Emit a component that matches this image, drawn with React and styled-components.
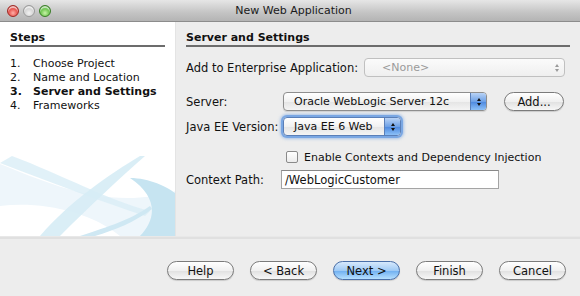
import React from "react";
import styled, { createGlobalStyle, css } from "styled-components";

const GlobalStyle = createGlobalStyle`
  html, body {
    margin: 0;
    padding: 0;
    background: #ededed;
  }
  body {
    font-family: "DejaVu Sans", "Liberation Sans", sans-serif;
    font-size: 11px;
    color: #111;
  }
`;

const Window = styled.div`
  width: 580px;
  height: 296px;
  display: flex;
  flex-direction: column;
  background: #ededed;
  overflow: hidden;
`;

const TitleBar = styled.div`
  height: 22px;
  flex: none;
  display: flex;
  align-items: center;
  background: linear-gradient(#e6e6e6, #c4c4c4 60%, #b4b4b4);
  border-bottom: 1px solid #8c8c8c;
  box-sizing: border-box;

  .title {
    flex: 1;
    text-align: center;
    font-size: 11px;
    color: #1a1a1a;
    margin-right: 49px;
  }
`;

const Lights = styled.div`
  display: flex;
  gap: 4px;
  padding-left: 7px;
  width: 49px;
`;

const Light = styled.span`
  width: 12px;
  height: 12px;
  border-radius: 50%;
  box-sizing: border-box;
  border: 1px solid ${(p) => p.$edge};
  background: radial-gradient(circle at 50% 70%, ${(p) => p.$light} 0%, ${(p) => p.$color} 60%, ${(p) => p.$edge} 100%);
  box-shadow: inset 0 2px 1px rgba(255, 255, 255, 0.7);
`;

const Body = styled.div`
  flex: 1;
  display: flex;
  min-height: 0;
`;

const Sidebar = styled.div`
  width: 176px;
  flex: none;
  background: #fff;
  display: flex;
  flex-direction: column;
  border-right: 1px solid #e4e4e4;
  box-sizing: border-box;
  overflow: hidden;
`;

const SectionTitle = styled.div`
  font-weight: bold;
  font-size: 11px;
  padding-bottom: 1px;
  border-bottom: 2px solid #6c6c6c;
  margin: 9px ${(p) => p.$right}px 0 10px;
  line-height: 13px;
`;

const StepList = styled.ol`
  list-style: none;
  margin: 10px 0 0 10px;
  padding: 0;
`;

const Step = styled.li`
  display: flex;
  line-height: 14px;
  font-weight: ${(p) => (p.$active ? "bold" : "normal")};

  .num {
    width: 23px;
  }
`;

const Swoosh = styled.svg`
  margin-top: auto;
  display: block;
`;

const Main = styled.div`
  flex: 1;
  display: flex;
  flex-direction: column;
`;

const Form = styled.div`
  margin: 0 0 0 10px;
  display: flex;
  flex-direction: column;
`;

const Row = styled.div`
  display: flex;
  align-items: center;
  height: ${(p) => p.$h || 25}px;
  margin-top: ${(p) => p.$mt || 0}px;
`;

const Label = styled.span`
  width: ${(p) => p.$w}px;
  flex: none;
  font-size: 11.5px;
`;

const Popup = styled.div`
  position: relative;
  width: ${(p) => p.$w}px;
  height: 19px;
  box-sizing: border-box;
  border: 1px solid #8e8e8e;
  border-radius: 4px;
  background: linear-gradient(#ffffff, #f1f1f1 50%, #e4e4e4 51%, #f4f4f4);
  display: flex;
  align-items: center;
  padding-left: 10px;
  font-size: 11px;
  color: #111;
  overflow: hidden;
  box-shadow: 0 1px 1px rgba(0, 0, 0, 0.12);

  ${(p) =>
    p.$focus &&
    css`
      box-shadow: 0 0 0 2px #7aa7e3, 0 0 3px 3px rgba(122, 167, 227, 0.6);
      border-color: #5a7fb8;
    `}

  ${(p) =>
    p.$disabled &&
    css`
      color: #9a9a9a;
      border-color: #c0c0c0;
      background: linear-gradient(#fbfbfb, #efefef);
      box-shadow: none;
      padding-left: 17px;
    `}
`;

const Stepper = styled.span`
  position: absolute;
  right: 0;
  top: 0;
  bottom: 0;
  width: 15px;
  display: flex;
  flex-direction: column;
  align-items: center;
  justify-content: center;
  gap: 2px;
  background: ${(p) =>
    p.$disabled ? "transparent" : "linear-gradient(#b9d3f6, #6ea1e6 50%, #4a86de 51%, #8cc0f7)"};
  border-left: ${(p) => (p.$disabled ? "none" : "1px solid #5a7fb8")};

  i {
    width: 0;
    height: 0;
    border-left: 2.5px solid transparent;
    border-right: 2.5px solid transparent;
  }
  i.up {
    border-bottom: 3px solid ${(p) => (p.$disabled ? "#9a9a9a" : "#111")};
  }
  i.down {
    border-top: 3px solid ${(p) => (p.$disabled ? "#9a9a9a" : "#111")};
  }
`;

const Pill = styled.button`
  width: ${(p) => p.$w}px;
  height: 19px;
  box-sizing: border-box;
  border: 1px solid #7b7b7b;
  border-radius: 10px;
  font-family: inherit;
  font-size: 11.5px;
  color: #111;
  padding: 0;
  margin-left: ${(p) => p.$ml || 0}px;
  background: linear-gradient(#ffffff, #f0f0f0 50%, #e0e0e0 51%, #f7f7f7);
  box-shadow: 0 1px 1px rgba(0, 0, 0, 0.15);

  ${(p) =>
    p.$primary &&
    css`
      border-color: #4a6fa8;
      background: linear-gradient(#d7e9fc, #9fcaf5 50%, #6eaef0 51%, #b6e0ff);
    `}
`;

const CheckRow = styled.label`
  display: flex;
  align-items: center;
  gap: 6px;
  margin-left: 100px;
  font-size: 11px;
`;

const Check = styled.span`
  width: 12px;
  height: 12px;
  box-sizing: border-box;
  border: 1px solid #8a8a8a;
  border-radius: 2px;
  background: linear-gradient(#ffffff, #ececec);
`;

const TextField = styled.div`
  width: 218px;
  height: 19px;
  box-sizing: border-box;
  border: 1px solid #a4a4a4;
  border-top-color: #888;
  background: #fff;
  display: flex;
  align-items: center;
  padding-left: 3px;
  font-size: 11.5px;
`;

const Divider = styled.div`
  height: 2px;
  flex: none;
  background: #e0e0e0;
  border-top: 1px solid #e8e8e8;
`;

const Footer = styled.div`
  height: 57px;
  flex: none;
  display: flex;
  align-items: center;
  justify-content: flex-end;
  gap: 16px;
  padding: 6px 14px 0 0;
  box-sizing: border-box;
`;

const steps = ["Choose Project", "Name and Location", "Server and Settings", "Frameworks"];

function Select({ w, children, focus, disabled }) {
  return (
    <Popup $w={w} $focus={focus} $disabled={disabled}>
      {children}
      <Stepper $disabled={disabled}>
        <i className="up" />
        <i className="down" />
      </Stepper>
    </Popup>
  );
}

export default function App() {
  return (
    <>
      <GlobalStyle />
      <Window>
        <TitleBar>
          <Lights>
            <Light $color="#e2403a" $light="#ffb0a8" $edge="#9e2a25" />
            <Light $color="#cfcfcf" $light="#f2f2f2" $edge="#9a9a9a" />
            <Light $color="#5bbd3c" $light="#c8f2a8" $edge="#3a7d27" />
          </Lights>
          <span className="title">New Web Application</span>
        </TitleBar>

        <Body>
          <Sidebar>
            <SectionTitle $right={10}>Steps</SectionTitle>
            <StepList>
              {steps.map((s, i) => (
                <Step key={s} $active={i === 2}>
                  <span className="num">{i + 1}.</span>
                  {s}
                </Step>
              ))}
            </StepList>
            <Swoosh width="176" height="80" viewBox="0 0 176 80">
              <path d="M0 8 C50 28 110 55 176 35 L176 80 L120 80 C90 55 40 45 0 50 Z" fill="#eef6fb" />
              <path d="M12 0 C60 18 110 45 150 55 L145 60 C100 45 55 28 0 7 Z" fill="#d9eef6" opacity="0.8" />
              <path d="M140 0 C110 18 70 45 40 80 L60 80 C90 50 120 22 145 0 Z" fill="#d6ecf5" opacity="0.9" />
              <path d="M130 22 C150 22 170 32 176 38 L176 80 L140 80 C155 65 160 42 130 22 Z" fill="#c6e4f1" />
              <path d="M80 80 C110 70 130 64 150 50 L152 53 C135 66 115 74 95 80 Z" fill="#cfe8f3" />
            </Swoosh>
          </Sidebar>

          <Main>
            <SectionTitle $right={10}>Server and Settings</SectionTitle>
            <Form>
              <Row $mt={10} $h={21}>
                <Label $w={178}>Add to Enterprise Application:</Label>
                <Select w={201} disabled>
                  &lt;None&gt;
                </Select>
              </Row>
              <Row $mt={13} $h={21}>
                <Label $w={97}>Server:</Label>
                <Select w={204}>Oracle WebLogic Server 12c</Select>
                <Pill $w={60} $ml={17}>Add...</Pill>
              </Row>
              <Row $mt={4} $h={21}>
                <Label $w={97}>Java EE Version:</Label>
                <Select w={118} focus>
                  Java EE 6 Web
                </Select>
              </Row>
              <Row $mt={10} $h={20}>
                <CheckRow>
                  <Check />
                  Enable Contexts and Dependency Injection
                </CheckRow>
              </Row>
              <Row $mt={2} $h={21}>
                <Label $w={95}>Context Path:</Label>
                <TextField>/WebLogicCustomer</TextField>
              </Row>
            </Form>
          </Main>
        </Body>

        <Divider />
        <Footer>
          <Pill $w={67}>Help</Pill>
          <Pill $w={67}>&lt; Back</Pill>
          <Pill $w={67} $primary>Next &gt;</Pill>
          <Pill $w={67}>Finish</Pill>
          <Pill $w={67}>Cancel</Pill>
        </Footer>
      </Window>
    </>
  );
}
